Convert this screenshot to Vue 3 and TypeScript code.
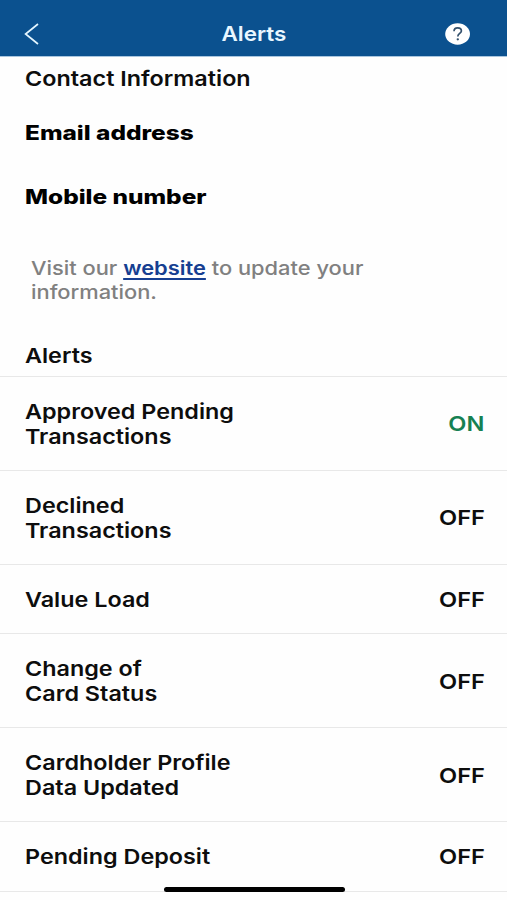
<script setup lang="ts">
interface AlertRow {
  lines: string[]
  on: boolean
}

const rows: AlertRow[] = [
  { lines: ['Approved Pending', 'Transactions'], on: true },
  { lines: ['Declined', 'Transactions'], on: false },
  { lines: ['Value Load'], on: false },
  { lines: ['Change of', 'Card Status'], on: false },
  { lines: ['Cardholder Profile', 'Data Updated'], on: false },
  { lines: ['Pending Deposit'], on: false },
]
</script>

<template>
  <div class="screen">
    <header class="bar">
      <button class="icon-button" aria-label="Back">
        <svg width="16" height="24" viewBox="0 0 16 24" fill="none">
          <path d="M14 2 L1.6 12 L14 22" stroke="#e4f6ff" stroke-width="1.7" />
        </svg>
      </button>
      <h1 class="title">Alerts</h1>
      <button class="icon-button" aria-label="Help">
        <svg width="26" height="22" viewBox="0 0 26 22" fill="none">
          <ellipse cx="12.6" cy="11" rx="12.4" ry="10.7" fill="#fff" />
          <path
            d="M9 8.2 C9 6 10.4 4.8 12.6 4.8 C14.9 4.8 16.4 6 16.4 7.9 C16.4 10.4 12.8 10.4 12.8 13.4"
            stroke="#34516d"
            stroke-width="1.7"
          />
          <ellipse cx="12.8" cy="16.3" rx="1.2" ry="1.1" fill="#34516d" />
        </svg>
      </button>
    </header>

    <section class="contact">
      <h2 class="text heading">Contact Information</h2>
      <h3 class="text field email">Email address</h3>
      <h3 class="text field mobile">Mobile number</h3>
      <p class="text note">Visit our <a class="link">website</a> to update your<br />information.</p>
    </section>

    <h2 class="text section-title">Alerts</h2>
    <ul class="list">
      <li v-for="row in rows" :key="row.lines.join(' ')" class="row" :class="{ single: row.lines.length === 1 }">
        <span class="text label">
          <span v-for="line in row.lines" :key="line" class="line">{{ line }}</span>
        </span>
        <span class="state" :class="{ on: row.on }">{{ row.on ? 'ON' : 'OFF' }}</span>
      </li>
    </ul>
    <div class="home-indicator"></div>
  </div>
</template>

<style>
body {
  margin: 0;
  background: #fefefe;
}
</style>

<style scoped>
.screen {
  position: relative;
  width: 507px;
  height: 900px;
  overflow: hidden;
  box-sizing: border-box;
  background: #fefefe;
  color: #0d0d0d;
  font-family: Inter, 'Liberation Sans', sans-serif;
  font-size: 20.5px;
  font-weight: 600;
  line-height: 25px;
}
.bar {
  display: flex;
  justify-content: space-between;
  box-sizing: border-box;
  height: 57px;
  padding: 21px 36px 0 24px;
  background: #0b518f;
  border-bottom: 1px solid #a9c6df;
}
.icon-button {
  display: flex;
  justify-content: flex-start;
  align-items: center;
  width: 26px;
  height: 25px;
  padding: 0;
  border: 0;
  background: none;
}
.title {
  margin: 0 0 0 13px;
  color: #e9f7ff;
  font-size: 20px;
  font-weight: 600;
  line-height: 26px;
  transform: scaleX(1.12);
}
.text {
  margin: 0;
  white-space: nowrap;
  transform: scaleX(1.14);
  transform-origin: left;
}
.contact {
  height: 286px;
  padding-left: 25px;
}
.heading {
  padding-top: 9px;
  font-size: inherit;
  font-weight: 600;
}
.field {
  color: #000;
  font-size: 20px;
  font-weight: 800;
  transform: scaleX(1.22);
}
.email {
  margin-top: 30px;
}
.mobile {
  margin-top: 39px;
}
.note {
  margin: 47px 0 0 6px;
  color: #808080;
  font-size: 19px;
  font-weight: 500;
  line-height: 24px;
  transform: scaleX(1.15);
}
.link {
  color: #163f91;
  font-weight: 600;
  text-decoration: underline;
  text-decoration-thickness: 1.5px;
  text-underline-offset: 3px;
}
.section-title {
  padding-left: 25px;
  transform-origin: 25px center;
  height: 33px;
  font-size: inherit;
  font-weight: 600;
}
.list {
  margin: 0;
  padding: 0;
  list-style: none;
  border-top: 1px solid #e8e8e8;
}
.row {
  display: flex;
  justify-content: space-between;
  align-items: center;
  box-sizing: border-box;
  height: 93.8px;
  padding: 1px 22.5px 0 25px;
  border-bottom: 1px solid #e8e8e8;
}
.row.single {
  height: 69.8px;
}
.line {
  display: block;
}
.state {
  transform: scaleX(1.15);
  transform-origin: right;
}
.state.on {
  color: #168052;
}
.home-indicator {
  position: absolute;
  left: 164px;
  top: 887px;
  width: 181px;
  height: 5px;
  border-radius: 3px;
  background: #000;
}
</style>
